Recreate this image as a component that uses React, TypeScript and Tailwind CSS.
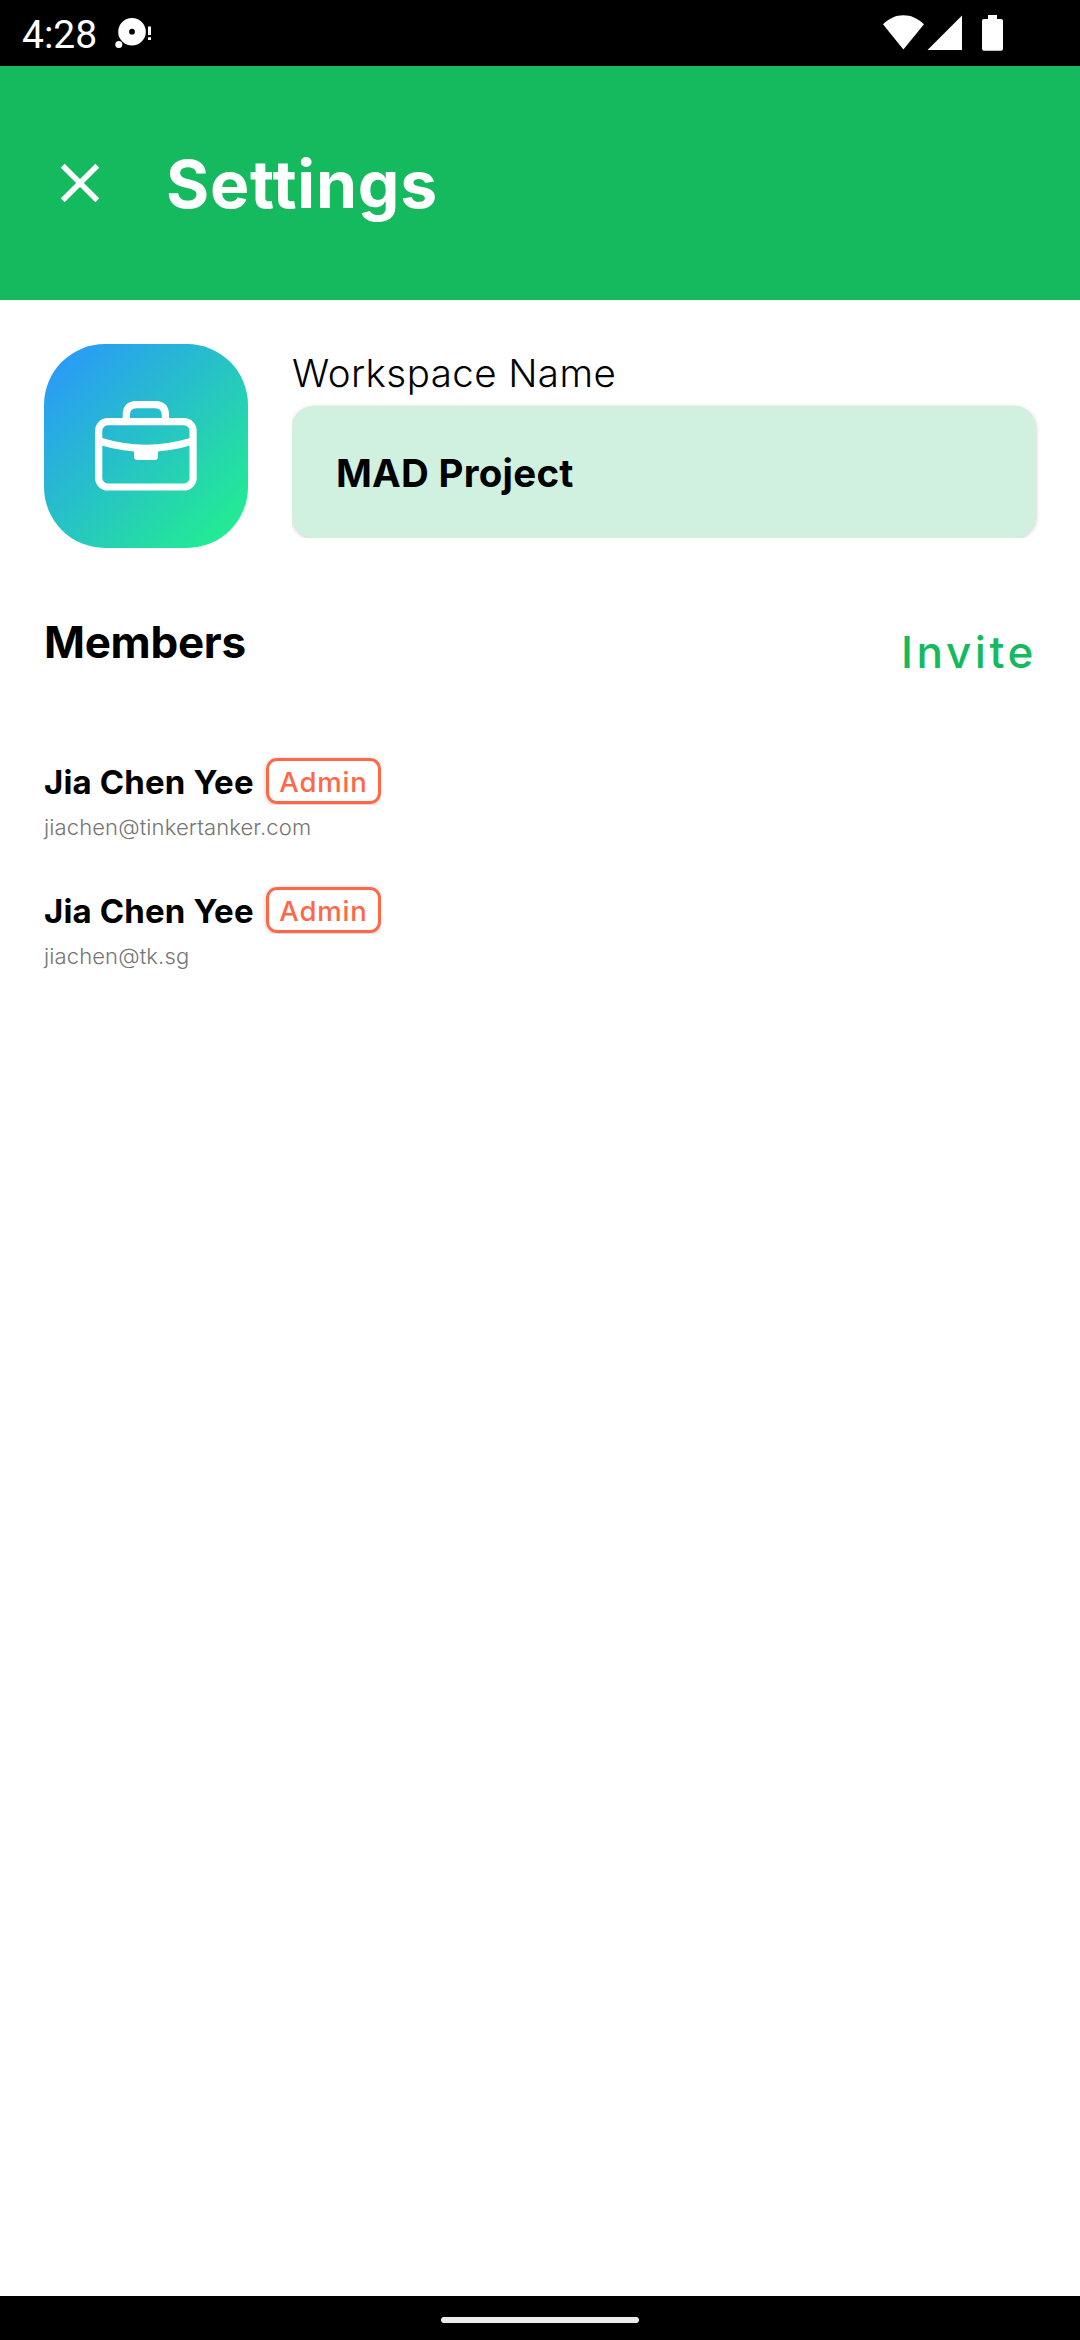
const members = [
  { name: "Jia Chen Yee", role: "Admin", email: "jiachen@tinkertanker.com" },
  { name: "Jia Chen Yee", role: "Admin", email: "jiachen@tk.sg" },
];

function StatusBar() {
  return (
    <div className="flex h-[66px] items-center bg-black text-white">
      <span className="ml-[22px] w-[92px] pt-[4px] font-['Roboto',sans-serif] text-[39px] leading-none">4:28</span>
      <svg width="38" height="66" viewBox="114 0 38 66" fill="currentColor">
        <path fillRule="evenodd" d="M132 17.9a13.8 13.8 0 1 1 0 27.6a13.8 13.8 0 1 1 0-27.6zM132 28.8a2.9 2.9 0 1 0 0 5.8a2.9 2.9 0 1 0 0-5.8z" />
        <circle cx="118.8" cy="44.6" r="3.5" />
        <path d="M148 26.5h3v8.5h-3zM148 37.3h3v2.7h-3z" />
      </svg>
      <svg className="mr-[76px] ml-auto" width="124" height="66" viewBox="880 0 124 66" fill="currentColor">
        <path d="M903.4 49.6L883 24.3C888.8 18.5 895.5 15.2 903.4 15.2S918 18.5 924 24.3z" />
        <path d="M927.5 50L962 15.5V50z" />
        <path d="M988 15h9v4h4a2 2 0 0 1 2 2v27.7a2 2 0 0 1-2 2h-17a2 2 0 0 1-2-2V21a2 2 0 0 1 2-2h4z" />
      </svg>
    </div>
  );
}

function Briefcase() {
  return (
    <svg width="204" height="204" viewBox="0 0 204 204" fill="none" stroke="#fff" strokeWidth="7.2">
      <rect x="54.7" y="77.7" width="94.4" height="65.3" rx="9" />
      <path d="M82.3 77V71Q82.3 60.6 92.5 60.6H111.2Q121.400 60.6 121.400 71V77" />
      <path d="M56 97.3Q102 111.3 148 97.3" />
      <path d="M90 104h24v8.5q0 3.5-3.5 3.5h-17q-3.5 0-3.5-3.5z" fill="#fff" stroke="none" />
    </svg>
  );
}

export default function App() {
  return (
    <div className="flex h-[2340px] w-[1080px] flex-col bg-white font-['Inter',sans-serif] text-black">
      <StatusBar />
      <header className="flex h-[234px] items-center bg-[#15ba5e] pl-[47px] text-white">
        <svg width="66" height="66" viewBox="0 0 24 24" fill="currentColor">
          <path d="M19 6.41L17.59 5 12 10.59 6.41 5 5 6.41 10.59 12 5 17.59 6.41 19 12 13.41 17.59 19 19 17.59 13.41 12z" />
        </svg>
        <h1 className="ml-[53px] pt-[2px] text-[66px] leading-none font-bold tracking-[0.7px]">Settings</h1>
      </header>

      <main className="flex-1 px-11 pt-11">
        <section className="flex gap-11">
          <div className="h-[204px] w-[204px] rounded-[61px] bg-[linear-gradient(135deg,#2a94ff,#22f488)]">
            <Briefcase />
          </div>
          <div className="flex-1">
            <div className="mb-1 h-[58px] text-[38.5px] leading-[58px] font-light tracking-[0.43px]">Workspace Name</div>
            <div className="[clip-path:inset(-6px_-6px_0_0)]">
              <div className="flex h-[132px] items-center rounded-[22px] bg-[#d0f0e0] pt-[4px] pl-11 text-[38.5px] font-bold tracking-[0.25px] shadow-[0_1px_4px_rgba(0,0,0,0.22)]">
                MAD Project
              </div>
            </div>
          </div>
        </section>

        <section className="mt-[62px] flex h-[84px] items-start justify-between">
          <h2 className="text-[44px] leading-[64px] font-bold tracking-[-0.3px]">Members</h2>
          <button className="-mr-px text-[44px] leading-[84px] font-medium tracking-[3.57px] text-[#15ba5e]">Invite</button>
        </section>

        <ul className="mt-[64px]">
          {members.map((m) => (
            <li key={m.email} className="h-[129px]">
              <div className="flex h-[46px] items-center">
                <span className="w-[222px] pt-[3px] text-[33px] leading-none font-bold tracking-[0.14px] whitespace-nowrap">{m.name}</span>
                <span className="[clip-path:inset(-4px_0_-1px_-5px)]">
                  <span className="flex h-[46px] w-[115px] items-center justify-center rounded-[11px] border-[3px] border-[#ff6847] pt-[3px] text-[27.5px] leading-none font-medium tracking-[0.85px] text-[#ff6847] shadow-[0_1px_4px_rgba(0,0,0,0.25)]">
                    {m.role}
                  </span>
                </span>
              </div>
              <div className="mt-[7px] text-[22px] leading-[32px] font-light tracking-[0.12px] text-[#757575]">{m.email}</div>
            </li>
          ))}
        </ul>
      </main>

      <footer className="flex h-11 justify-center bg-black pt-[21px]">
        <div className="h-[6px] w-[198px] rounded-full bg-[#ececec]" />
      </footer>
    </div>
  );
}
